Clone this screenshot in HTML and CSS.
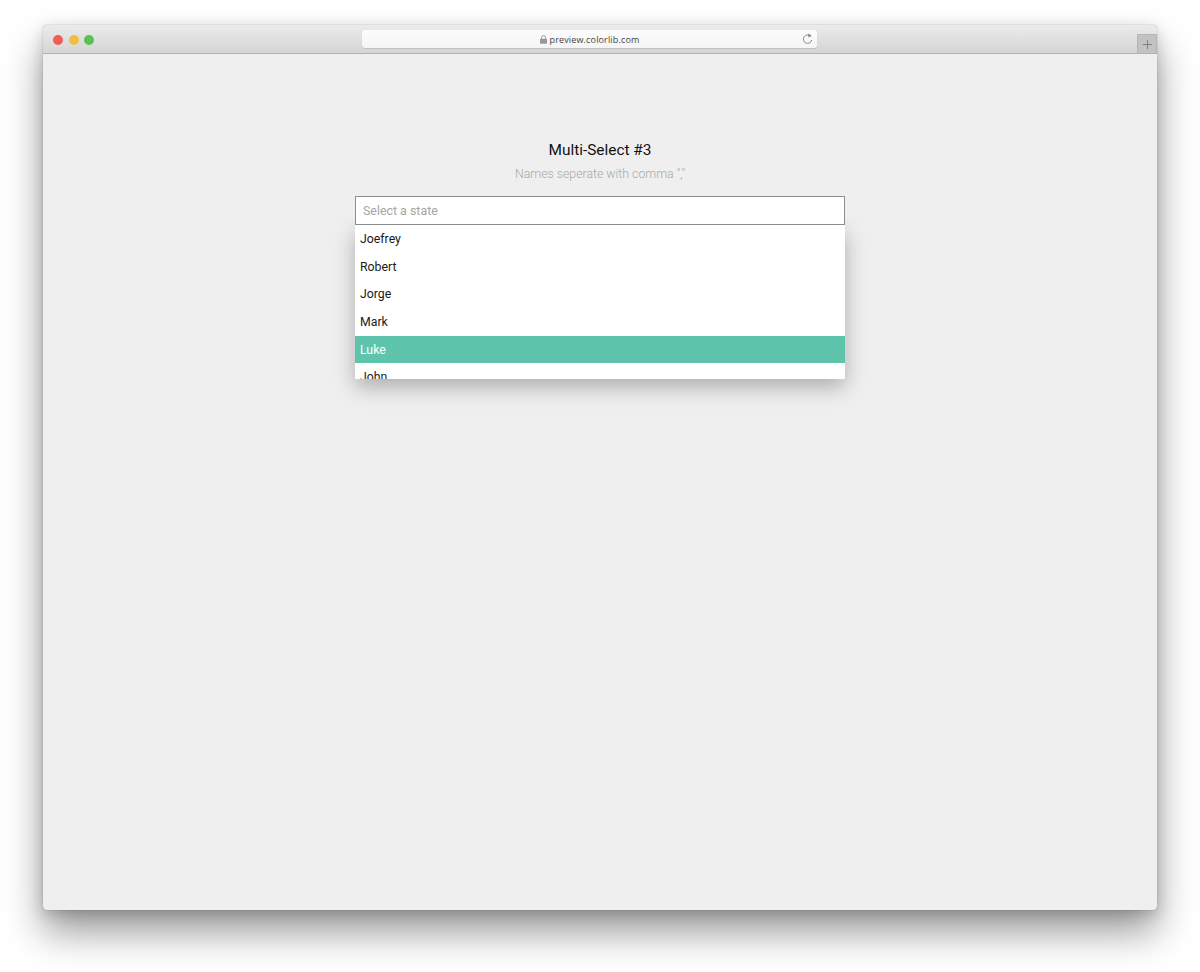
FILE: index.html
```html
<!DOCTYPE html>
<html lang="en">
<head>
<meta charset="utf-8">
<title>Multi-Select #3</title>
<link rel="stylesheet" href="styles.css">
</head>
<body>
<div class="window">
  <header class="toolbar">
    <div class="lights">
      <span class="light red"></span>
      <span class="light yellow"></span>
      <span class="light green"></span>
    </div>
    <div class="address">
      <div class="url">
        <svg class="lock" width="7" height="9" viewBox="0 0 7 9"><path d="M1.5 4V2.6a2 2 0 0 1 4 0V4" fill="none" stroke="#999" stroke-width="1"/><rect x="0" y="3.8" width="7" height="5" rx=".7" fill="#999"/></svg>
        <span>preview.colorlib.com</span>
      </div>
      <svg class="reload" width="11" height="12" viewBox="0 0 11 12"><path d="M8.9 3.6A4.2 4.2 0 1 0 9.7 7" fill="none" stroke="#888" stroke-width="1"/><path d="M6.2 0.4 9.6 2.6 6.4 4.6Z" fill="#888"/></svg>
    </div>
    <div class="newtab">
      <svg width="9" height="9" viewBox="0 0 9 9"><path d="M4.5 0v9M0 4.5h9" stroke="#808080" stroke-width="1"/></svg>
    </div>
  </header>
  <main class="page">
    <h1 class="title">Multi-Select #3</h1>
    <p class="subtitle">Names seperate with comma ","</p>
    <div class="select">
      <div class="input">Select a state</div>
      <ul class="options">
        <li class="option">Joefrey</li>
        <li class="option">Robert</li>
        <li class="option">Jorge</li>
        <li class="option">Mark</li>
        <li class="option active">Luke</li>
        <li class="option">John</li>
      </ul>
    </div>
  </main>
</div>
</body>
</html>
```
FILE: styles.css
```css
* { box-sizing: border-box; }
html, body { margin: 0; height: 100%; background: #fff; overflow: hidden; }
body { padding: 25px 43px 62px; font-family: Roboto, "Liberation Sans", sans-serif; }

.window {
  height: 885px;
  display: flex;
  flex-direction: column;
  border-radius: 4px;
  background: #efefef;
  box-shadow: 0 0 1px rgba(0,0,0,.5), 0 22px 38px rgba(0,0,0,.4), 0 4px 14px rgba(0,0,0,.16);
}

.toolbar {
  height: 29px;
  flex: none;
  display: grid;
  grid-template-columns: 319px 455px 1fr;
  align-items: start;
  background: linear-gradient(#ebebeb, #d5d5d5);
  border-bottom: 1px solid #b1b1b1;
  border-radius: 4px 4px 0 0;
}

.lights { display: flex; gap: 5.5px; padding: 10px 0 0 10px; }
.light { width: 10px; height: 10px; border-radius: 50%; }
.red { background: #ef5e56; }
.yellow { background: #f3bc45; }
.green { background: #57c353; }

.address {
  margin-top: 5px;
  height: 18px;
  position: relative;
  display: flex;
  justify-content: center;
  align-items: center;
  background: linear-gradient(#fcfcfc, #f5f5f5);
  border-radius: 3px;
  box-shadow: 0 1px 1px rgba(0,0,0,.12);
}
.url { display: flex; align-items: center; gap: 3px; font-size: 9px; color: #444; letter-spacing: .15px; font-family: "Open Sans", "Liberation Sans", sans-serif; }
.lock { flex: none; }
.reload { position: absolute; right: 4px; top: 3px; }

.newtab {
  justify-self: end;
  margin-top: 9px;
  width: 20px;
  height: 19px;
  display: flex;
  align-items: center;
  justify-content: center;
  background: #c2c2c2;
  border: 1px solid #b5b5b5;
  border-bottom: 0;
}

.page { flex: 1; display: flex; flex-direction: column; align-items: center; padding-top: 86px; }
.title { margin: 0; font-size: 15.4px; line-height: 20px; font-weight: 400; color: #111; }
.subtitle { margin: 4px 0 0; font-size: 12.3px; line-height: 20px; font-weight: 300; color: #a8a8a8; }

.select { width: 490px; margin-top: 12px; }
.input {
  position: relative;
  z-index: 1;
  height: 29px;
  padding-left: 7px;
  display: flex;
  align-items: center;
  border: 1px solid #8c8c8c;
  background: #fefefe;
  font-size: 12.4px;
  font-weight: 400;
  color: #a6a6a6;
}

.options {
  list-style: none;
  margin: 0;
  padding: 0;
  height: 154px;
  overflow: hidden;
  background: #fff;
  box-shadow: 0 8px 20px rgba(0,0,0,.28);
}
.option { height: 27.7px; padding: 1px 0 0 5px; line-height: 27.7px; font-size: 12.3px; color: #1a1a1a; }
.active { background: #5fc4ac; color: #fff; }
```
